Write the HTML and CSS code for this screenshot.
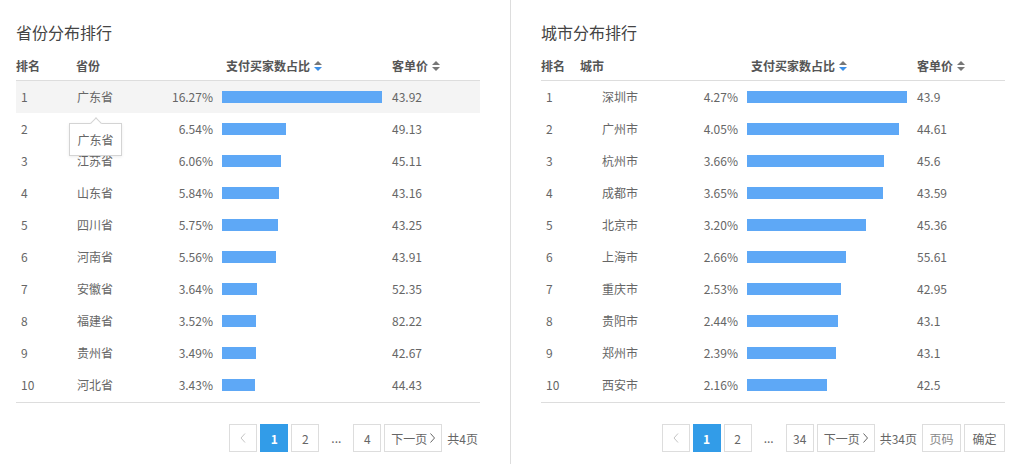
FILE: index.html
```html
<!DOCTYPE html>
<html lang="zh-CN">
<head>
    <meta charset="UTF-8">
    <title>地域分布排行</title>
    <link rel="stylesheet" href="styles.css">
</head>
<body>
<div class="page">
    <section class="panel panel-left">
        <h2 class="title">省份分布排行</h2>
        <div class="table">
            <div class="thead">
                <span>排名</span>
                <span>省份</span>
                <span class="sort">支付买家数占比
                    <svg width="8" height="10" viewBox="0 0 8 10"><polygon points="0,4 4,0 8,4" fill="#777"/><polygon points="0,6 8,6 4,10" fill="#3b8fe8"/></svg>
                </span>
                <span class="sort">客单价
                    <svg width="8" height="10" viewBox="0 0 8 10"><polygon points="0,4 4,0 8,4" fill="#777"/><polygon points="0,6 8,6 4,10" fill="#777"/></svg>
                </span>
            </div>
            <div class="row active">
                <span class="rank">1</span>
                <span class="name">广东省<div class="tip">广东省</div></span>
                <span class="pct">16.27%</span>
                <span class="bar-cell"><i class="bar" style="width:160px"></i></span>
                <span class="price">43.92</span>
            </div>
            <div class="row"><span class="rank">2</span><span class="name"></span><span class="pct">6.54%</span><span class="bar-cell"><i class="bar" style="width:64px"></i></span><span class="price">49.13</span></div>
            <div class="row"><span class="rank">3</span><span class="name">江苏省</span><span class="pct">6.06%</span><span class="bar-cell"><i class="bar" style="width:59px"></i></span><span class="price">45.11</span></div>
            <div class="row"><span class="rank">4</span><span class="name">山东省</span><span class="pct">5.84%</span><span class="bar-cell"><i class="bar" style="width:57px"></i></span><span class="price">43.16</span></div>
            <div class="row"><span class="rank">5</span><span class="name">四川省</span><span class="pct">5.75%</span><span class="bar-cell"><i class="bar" style="width:56px"></i></span><span class="price">43.25</span></div>
            <div class="row"><span class="rank">6</span><span class="name">河南省</span><span class="pct">5.56%</span><span class="bar-cell"><i class="bar" style="width:54px"></i></span><span class="price">43.91</span></div>
            <div class="row"><span class="rank">7</span><span class="name">安徽省</span><span class="pct">3.64%</span><span class="bar-cell"><i class="bar" style="width:35px"></i></span><span class="price">52.35</span></div>
            <div class="row"><span class="rank">8</span><span class="name">福建省</span><span class="pct">3.52%</span><span class="bar-cell"><i class="bar" style="width:34px"></i></span><span class="price">82.22</span></div>
            <div class="row"><span class="rank">9</span><span class="name">贵州省</span><span class="pct">3.49%</span><span class="bar-cell"><i class="bar" style="width:34px"></i></span><span class="price">42.67</span></div>
            <div class="row"><span class="rank">10</span><span class="name">河北省</span><span class="pct">3.43%</span><span class="bar-cell"><i class="bar" style="width:33px"></i></span><span class="price">44.43</span></div>
        </div>
        <div class="pager">
            <span class="pg prev"><svg width="6" height="10" viewBox="0 0 6 10"><polyline points="5,0.5 1,5 5,9.5" fill="none" stroke="#c4c4c4" stroke-width="1"/></svg></span>
            <span class="pg cur">1</span>
            <span class="pg">2</span>
            <span class="dots">...</span>
            <span class="pg">4</span>
            <span class="pg next">下一页<svg width="5" height="10" viewBox="0 0 5 10"><polyline points="0.5,0.5 4.5,5 0.5,9.5" fill="none" stroke="#666" stroke-width="1"/></svg></span>
            <span class="total">共4页</span>
        </div>
    </section>

    <section class="panel panel-right">
        <h2 class="title">城市分布排行</h2>
        <div class="table">
            <div class="thead thead-city">
                <span>排名</span>
                <span>城市</span>
                <span class="sort">支付买家数占比
                    <svg width="8" height="10" viewBox="0 0 8 10"><polygon points="0,4 4,0 8,4" fill="#777"/><polygon points="0,6 8,6 4,10" fill="#3b8fe8"/></svg>
                </span>
                <span class="sort">客单价
                    <svg width="8" height="10" viewBox="0 0 8 10"><polygon points="0,4 4,0 8,4" fill="#777"/><polygon points="0,6 8,6 4,10" fill="#777"/></svg>
                </span>
            </div>
            <div class="row"><span class="rank">1</span><span class="name">深圳市</span><span class="pct">4.27%</span><span class="bar-cell"><i class="bar" style="width:160px"></i></span><span class="price">43.9</span></div>
            <div class="row"><span class="rank">2</span><span class="name">广州市</span><span class="pct">4.05%</span><span class="bar-cell"><i class="bar" style="width:152px"></i></span><span class="price">44.61</span></div>
            <div class="row"><span class="rank">3</span><span class="name">杭州市</span><span class="pct">3.66%</span><span class="bar-cell"><i class="bar" style="width:137px"></i></span><span class="price">45.6</span></div>
            <div class="row"><span class="rank">4</span><span class="name">成都市</span><span class="pct">3.65%</span><span class="bar-cell"><i class="bar" style="width:136px"></i></span><span class="price">43.59</span></div>
            <div class="row"><span class="rank">5</span><span class="name">北京市</span><span class="pct">3.20%</span><span class="bar-cell"><i class="bar" style="width:119px"></i></span><span class="price">45.36</span></div>
            <div class="row"><span class="rank">6</span><span class="name">上海市</span><span class="pct">2.66%</span><span class="bar-cell"><i class="bar" style="width:99px"></i></span><span class="price">55.61</span></div>
            <div class="row"><span class="rank">7</span><span class="name">重庆市</span><span class="pct">2.53%</span><span class="bar-cell"><i class="bar" style="width:94px"></i></span><span class="price">42.95</span></div>
            <div class="row"><span class="rank">8</span><span class="name">贵阳市</span><span class="pct">2.44%</span><span class="bar-cell"><i class="bar" style="width:91px"></i></span><span class="price">43.1</span></div>
            <div class="row"><span class="rank">9</span><span class="name">郑州市</span><span class="pct">2.39%</span><span class="bar-cell"><i class="bar" style="width:89px"></i></span><span class="price">43.1</span></div>
            <div class="row"><span class="rank">10</span><span class="name">西安市</span><span class="pct">2.16%</span><span class="bar-cell"><i class="bar" style="width:80px"></i></span><span class="price">42.5</span></div>
        </div>
        <div class="pager">
            <span class="pg prev"><svg width="6" height="10" viewBox="0 0 6 10"><polyline points="5,0.5 1,5 5,9.5" fill="none" stroke="#c4c4c4" stroke-width="1"/></svg></span>
            <span class="pg cur">1</span>
            <span class="pg">2</span>
            <span class="dots">...</span>
            <span class="pg">34</span>
            <span class="pg next">下一页<svg width="5" height="10" viewBox="0 0 5 10"><polyline points="0.5,0.5 4.5,5 0.5,9.5" fill="none" stroke="#666" stroke-width="1"/></svg></span>
            <span class="total">共34页</span>
            <input class="pg jump" type="text" placeholder="页码">
            <span class="pg ok">确定</span>
        </div>
    </section>
</div>
</body>
</html>
```

FILE: styles.css
```css
body{
    margin:0;
    background:#fff;
    font-family:"Noto Sans CJK SC","Microsoft YaHei",sans-serif;
    font-size:12px;
    color:#666;
}
.page{
    display:flex;
    height:100vh;
}
.panel{
    width:464px;
    padding-top:20px;
}
.panel-left{
    padding-left:16px;
    padding-right:30px;
    border-right:1px solid #ddd;
}
.panel-right{
    padding-left:30px;
}
.title{
    margin:0;
    font-size:16px;
    font-weight:normal;
    line-height:24px;
    color:#444;
}

/* table */
.table{
    margin-top:8px;
    border-bottom:1px solid #ddd;
    padding-bottom:1px;
}
.thead{
    display:grid;
    grid-template-columns:60px 150px 166px 1fr;
    height:28px;
    line-height:28px;
    border-bottom:1px solid #ddd;
    font-weight:bold;
    color:#555;
}
.thead-city{
    grid-template-columns:39px 171px 166px 1fr;
}
.sort{
    display:flex;
    align-items:center;
}
.sort svg{
    margin-left:4px;
}
.row{
    display:grid;
    grid-template-columns:60px 80px 57px 179px 1fr;
    height:32px;
    line-height:32px;
    align-items:center;
}
.row.active{
    background:#f4f4f4;
}
.rank{
    padding-left:5px;
}
.name{
    position:relative;
    padding-left:1px;
}
.pct{
    text-align:right;
}
.bar-cell{
    padding-left:9px;
    display:flex;
    align-items:center;
}
.bar{
    display:block;
    height:12px;
    background:#5ea8f6;
}

/* tooltip over row 2 */
.tip{
    position:absolute;
    left:-7px;
    top:42px;
    width:53px;
    height:33px;
    box-sizing:border-box;
    border:1px solid #d4d4d4;
    background:#fff;
    text-align:center;
    line-height:31px;
    color:#666;
    box-shadow:0 1px 3px rgba(0,0,0,0.08);
    z-index:2;
}
.tip::before{
    content:"";
    position:absolute;
    left:22px;
    top:-5px;
    width:7px;
    height:7px;
    background:#fff;
    border-left:1px solid #d4d4d4;
    border-top:1px solid #d4d4d4;
    transform:rotate(45deg);
}

/* pager */
.pager{
    display:flex;
    justify-content:flex-end;
    align-items:center;
    gap:3px;
    margin-top:21px;
}
.pg{
    box-sizing:border-box;
    min-width:28px;
    height:28px;
    border:1px solid #ddd;
    display:flex;
    align-items:center;
    justify-content:center;
    color:#666;
    background:#fff;
    font-family:inherit;
    font-size:12px;
}
.pg.cur{
    background:#329ce8;
    border-color:#329ce8;
    color:#fff;
    font-weight:bold;
}
.pg.next{
    padding:0 6px;
    gap:3px;
}
.dots{
    width:28px;
    text-align:center;
    color:#666;
    line-height:28px;
}
.total{
    margin:0 2px;
    color:#666;
}
.jump{
    width:39px;
    padding:0;
    text-align:center;
    outline:none;
}
.jump::placeholder{
    color:#888;
}
.pg.ok{
    width:41px;
}
```
